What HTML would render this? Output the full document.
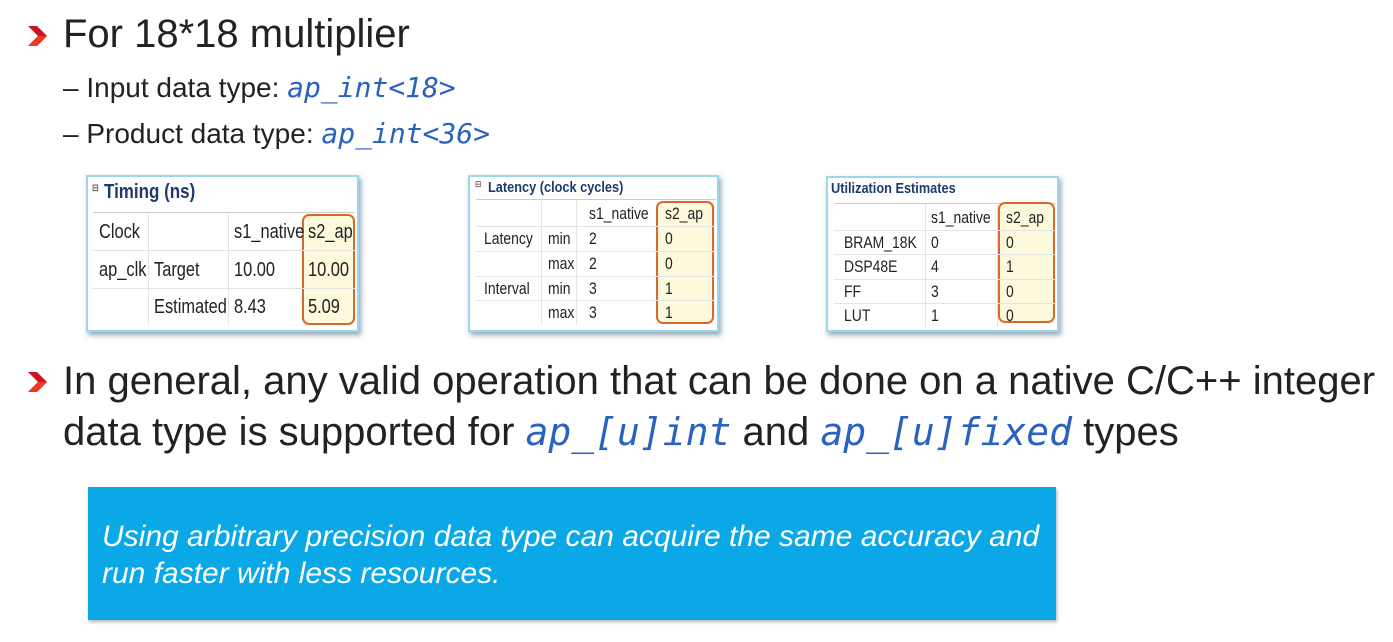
<!DOCTYPE html>
<html><head><meta charset="utf-8"><style>
body{margin:0;width:1393px;height:642px;background:#fff;position:relative;overflow:hidden;font-family:"Liberation Sans",sans-serif;color:#222}
.a{position:absolute;white-space:nowrap}
.chev{position:absolute;width:22px;height:22px}
.code{font-family:"DejaVu Sans Mono","Liberation Mono",monospace;font-style:italic;color:#2a62c0}
.box{position:absolute;background:#fff;border:2px solid #9fd6ea;box-shadow:2px 3px 5px rgba(0,60,90,.45)}
.t{position:absolute;font-size:16px;color:#222;white-space:nowrap;transform:scaleX(0.82);transform-origin:0 0}
.hl{position:absolute;border:2.5px solid #d9692a;border-radius:7px;background:#fdf9dc}
.hr{position:absolute;height:1px;background:#e4e4e4}
.vr{position:absolute;width:1px;background:#e4e4e4}
.ttl{position:absolute;font-weight:bold;color:#1f3a6e;white-space:nowrap;transform:scaleX(0.85);transform-origin:0 0}
</style></head><body>
<svg class="chev" style="left:26px;top:25px" viewBox="0 0 22 22"><path d="M2 1 L11 1 L21 11 L11 21 L2 21 L12 11 Z" fill="#c8181e"/><path d="M2 21 L11 21 L21 11 L12 11 Z" fill="#ee3a24"/></svg>
<div class="a" style="left:63px;top:12px;font-size:40px">For 18*18 multiplier</div>
<div class="a" style="left:63px;top:71px;font-size:28px">– Input data type: <span class="code" style="font-size:28px">ap_int&lt;18&gt;</span></div>
<div class="a" style="left:63px;top:117px;font-size:28px">– Product data type: <span class="code" style="font-size:28px">ap_int&lt;36&gt;</span></div>

<!-- Timing -->
<div class="box" style="left:86px;top:175px;width:269px;height:153px"></div>
<div class="t" style="left:92px;top:183px;font-size:10px">⊟</div>
<div class="ttl" style="left:104px;top:181px;font-size:20px">Timing (ns)</div>
<div class="hr" style="left:93px;top:212px;width:262px;background:#ccc"></div>
<div class="hl" style="left:302px;top:214px;width:49px;height:107px"></div>
<div class="hr" style="left:93px;top:250px;width:262px"></div>
<div class="hr" style="left:93px;top:288px;width:262px"></div>
<div class="vr" style="left:148px;top:213px;height:112px"></div>
<div class="vr" style="left:228px;top:213px;height:112px"></div>
<div class="t" style="left:99px;top:221px;font-size:20px">Clock</div>
<div class="t" style="left:234px;top:221px;font-size:20px">s1_native</div>
<div class="t" style="left:308px;top:221px;font-size:20px">s2_ap</div>
<div class="t" style="left:99px;top:259px;font-size:20px">ap_clk</div>
<div class="t" style="left:154px;top:259px;font-size:20px">Target</div>
<div class="t" style="left:234px;top:259px;font-size:20px">10.00</div>
<div class="t" style="left:308px;top:259px;font-size:20px">10.00</div>
<div class="t" style="left:154px;top:296px;font-size:20px">Estimated</div>
<div class="t" style="left:234px;top:296px;font-size:20px">8.43</div>
<div class="t" style="left:308px;top:296px;font-size:20px">5.09</div>

<!-- Latency -->
<div class="box" style="left:468px;top:175px;width:247px;height:153px"></div>
<div class="t" style="left:475px;top:179px;font-size:9px">⊟</div>
<div class="ttl" style="left:488px;top:179px;font-size:15px">Latency (clock cycles)</div>
<div class="hr" style="left:476px;top:199px;width:240px;background:#ccc"></div>
<div class="hl" style="left:656px;top:201px;width:54px;height:119px"></div>
<div class="hr" style="left:476px;top:226px;width:240px"></div>
<div class="hr" style="left:476px;top:251px;width:240px"></div>
<div class="hr" style="left:476px;top:276px;width:240px"></div>
<div class="hr" style="left:476px;top:300px;width:240px"></div>
<div class="vr" style="left:541px;top:200px;height:125px"></div>
<div class="vr" style="left:576px;top:200px;height:125px"></div>
<div class="t" style="left:589px;top:204px;font-size:17px">s1_native</div>
<div class="t" style="left:665px;top:204px;font-size:17px">s2_ap</div>
<div class="t" style="left:484px;top:229px;font-size:17px">Latency</div><div class="t" style="left:548px;top:229px;font-size:17px">min</div><div class="t" style="left:589px;top:229px;font-size:17px">2</div><div class="t" style="left:665px;top:229px;font-size:17px">0</div>
<div class="t" style="left:548px;top:254px;font-size:17px">max</div><div class="t" style="left:589px;top:254px;font-size:17px">2</div><div class="t" style="left:665px;top:254px;font-size:17px">0</div>
<div class="t" style="left:484px;top:279px;font-size:17px">Interval</div><div class="t" style="left:548px;top:279px;font-size:17px">min</div><div class="t" style="left:589px;top:279px;font-size:17px">3</div><div class="t" style="left:665px;top:279px;font-size:17px">1</div>
<div class="t" style="left:548px;top:303px;font-size:17px">max</div><div class="t" style="left:589px;top:303px;font-size:17px">3</div><div class="t" style="left:665px;top:303px;font-size:17px">1</div>

<!-- Utilization -->
<div class="box" style="left:826px;top:176px;width:229px;height:152px"></div>
<div class="ttl" style="left:831px;top:180px;font-size:15px">Utilization Estimates</div>
<div class="hr" style="left:834px;top:203px;width:222px;background:#ccc"></div>
<div class="hl" style="left:998px;top:202px;width:53px;height:117px"></div>
<div class="hr" style="left:834px;top:230px;width:222px"></div>
<div class="hr" style="left:834px;top:254px;width:222px"></div>
<div class="hr" style="left:834px;top:279px;width:222px"></div>
<div class="hr" style="left:834px;top:303px;width:222px"></div>
<div class="vr" style="left:925px;top:204px;height:123px"></div>
<div class="vr" style="left:997px;top:204px;height:123px"></div>
<div class="t" style="left:931px;top:208px;font-size:17px">s1_native</div>
<div class="t" style="left:1006px;top:208px;font-size:17px">s2_ap</div>
<div class="t" style="left:844px;top:233px;font-size:17px">BRAM_18K</div><div class="t" style="left:931px;top:233px;font-size:17px">0</div><div class="t" style="left:1006px;top:233px;font-size:17px">0</div>
<div class="t" style="left:844px;top:257px;font-size:17px">DSP48E</div><div class="t" style="left:931px;top:257px;font-size:17px">4</div><div class="t" style="left:1006px;top:257px;font-size:17px">1</div>
<div class="t" style="left:844px;top:282px;font-size:17px">FF</div><div class="t" style="left:931px;top:282px;font-size:17px">3</div><div class="t" style="left:1006px;top:282px;font-size:17px">0</div>
<div class="t" style="left:844px;top:306px;font-size:17px">LUT</div><div class="t" style="left:931px;top:306px;font-size:17px">1</div><div class="t" style="left:1006px;top:306px;font-size:17px">0</div>

<svg class="chev" style="left:26px;top:371px" viewBox="0 0 22 22"><path d="M2 1 L11 1 L21 11 L11 21 L2 21 L12 11 Z" fill="#c8181e"/><path d="M2 21 L11 21 L21 11 L12 11 Z" fill="#ee3a24"/></svg>
<div class="a" style="left:63px;top:359px;font-size:40px">In general, any valid operation that can be done on a native C/C++ integer</div>
<div class="a" style="left:63px;top:410px;font-size:40px">data type is supported for <span class="code" style="font-size:38px">ap_[u]int</span> and <span class="code" style="font-size:38px">ap_[u]fixed</span> types</div>

<div style="position:absolute;left:88px;top:487px;width:968px;height:133px;background:#0ba8e8;box-shadow:1px 2px 3px rgba(0,0,0,.3)"></div>
<div class="a" style="left:102px;top:518px;font-size:30px;font-style:italic;color:#fff;line-height:37px">Using arbitrary precision data type can acquire the same accuracy and<br>run faster with less resources.</div>
</body></html>
